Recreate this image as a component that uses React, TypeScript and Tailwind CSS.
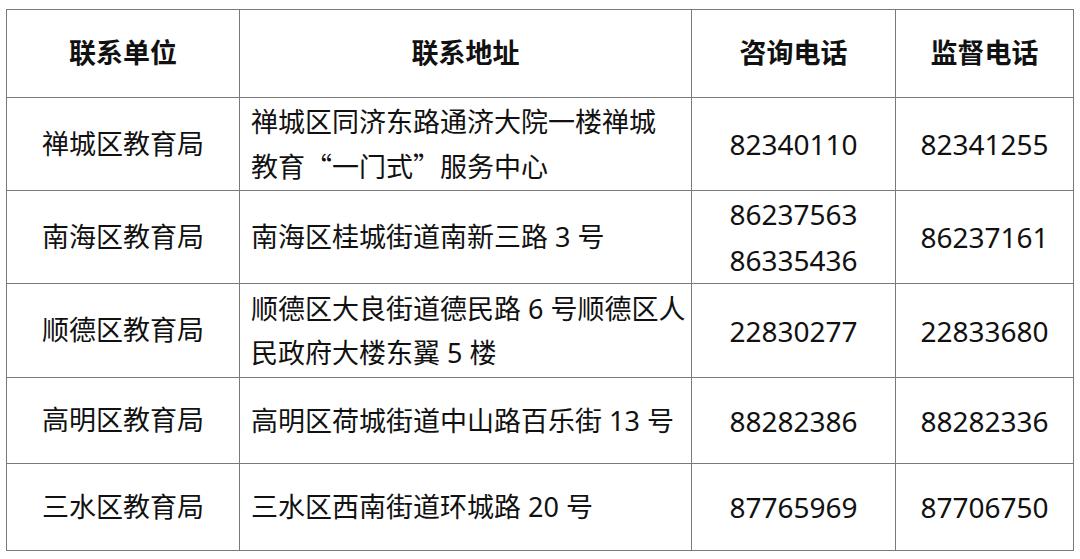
import React from 'react'

interface Row {
  unit: string
  address: React.ReactNode
  consult: React.ReactNode
  supervise: string
  height: string
}

const Q: React.FC<{ children: React.ReactNode }> = ({ children }) => (
  <span className="font-['Noto_Sans_CJK_SC',sans-serif]">{children}</span>
)

const rows: Row[] = [
  {
    unit: '禅城区教育局',
    address: (
      <>
        禅城区同济东路通济大院一楼禅城
        <br />
        教育<Q>“</Q>一门式<Q>”</Q>服务中心
      </>
    ),
    consult: '82340110',
    supervise: '82341255',
    height: 'h-[93px]',
  },
  {
    unit: '南海区教育局',
    address: '南海区桂城街道南新三路 3 号',
    consult: (
      <>
        86237563
        <br />
        86335436
      </>
    ),
    supervise: '86237161',
    height: 'h-[93px]',
  },
  {
    unit: '顺德区教育局',
    address: (
      <>
        顺德区大良街道德民路 6 号顺德区人
        <br />
        民政府大楼东翼 5 楼
      </>
    ),
    consult: '22830277',
    supervise: '22833680',
    height: 'h-[94px]',
  },
  {
    unit: '高明区教育局',
    address: '高明区荷城街道中山路百乐街 13 号',
    consult: '88282386',
    supervise: '88282336',
    height: 'h-[86px]',
  },
  {
    unit: '三水区教育局',
    address: '三水区西南街道环城路 20 号',
    consult: '87765969',
    supervise: '87706750',
    height: 'h-[87px]',
  },
]

const cell = 'border border-[#7a7a7a] p-0 align-middle'

const App: React.FC = () => {
  return (
    <div className="h-[559px] w-[1080px] bg-white pl-[6px] pt-[9px] font-['Noto_Sans','Noto_Sans_CJK_SC',sans-serif] text-[27px] text-[#111]">
      <table className="w-[1067px] table-fixed border-collapse border border-[#555]">
        <colgroup>
          <col className="w-[233px]" />
          <col className="w-[452px]" />
          <col className="w-[204px]" />
          <col className="w-[178px]" />
        </colgroup>
        <thead>
          <tr className="h-[88px] font-bold">
            <th className={`${cell} text-center`}>联系单位</th>
            <th className={`${cell} text-center`}>联系地址</th>
            <th className={`${cell} text-center`}>咨询电话</th>
            <th className={`${cell} text-center`}>监督电话</th>
          </tr>
        </thead>
        <tbody>
          {rows.map((row) => (
            <tr key={row.unit} className={row.height}>
              <td className={`${cell} text-center`}>{row.unit}</td>
              <td className={`${cell} pl-[11px] text-left leading-[44px]`}>{row.address}</td>
              <td className={`${cell} text-center text-[28px] leading-[46px]`}>{row.consult}</td>
              <td className={`${cell} text-center text-[28px]`}>{row.supervise}</td>
            </tr>
          ))}
        </tbody>
      </table>
    </div>
  )
}

export default App
